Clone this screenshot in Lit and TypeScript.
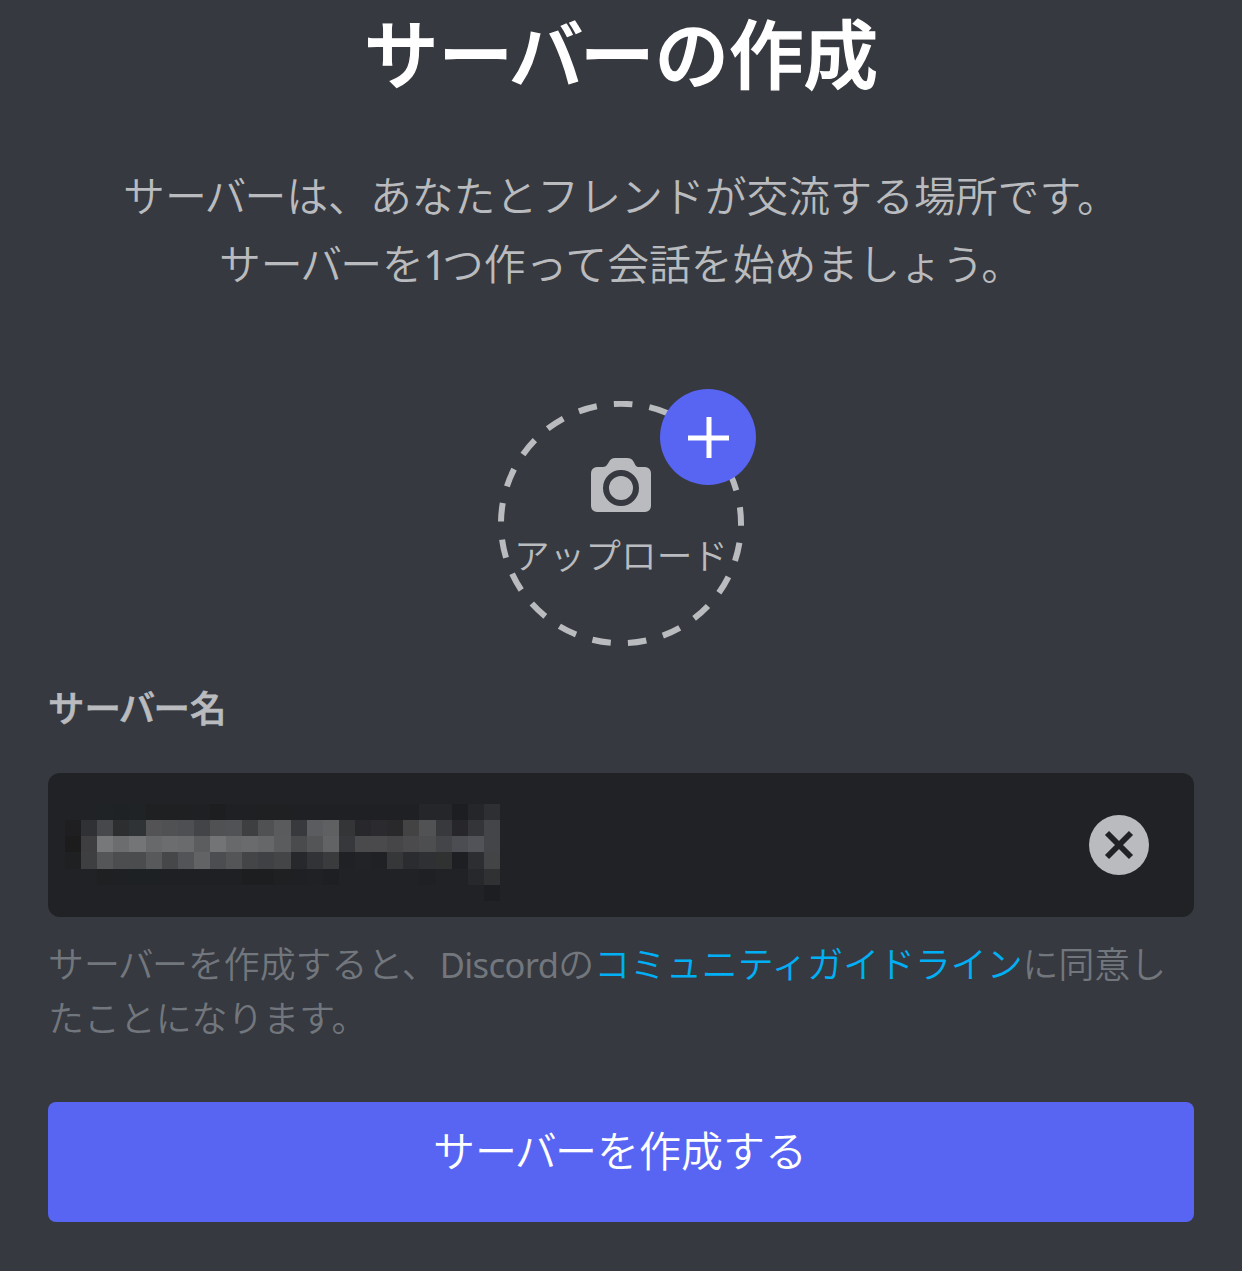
import { LitElement, html, css } from "lit";
import { customElement } from "lit/decorators.js";

// Shades of the pixelated server name, one string per row of cells.
const row = (s: string) => s.trim().split(/\s+/);
const MOSAIC: string[][] = [
  row(`202225 202225 1f2325 1f2225 1f2325 1f2022 1f2022 1f2022 1f2023 1d1e20 1f2023 1f2023 1f2022 1f2022
       1f2023 1f2023 1f2023 1f2023 1f2023 1f2023 1f2023 1f2023 25262a 25262a 1d1e21 25262a 2e2f33`),
  row(`1f1f22 303134 47484c 2d2e30 303336 535355 505152 4e4f52 434448 505153 515256 3e3f41 505153 5a5b5d
       38393d 5b5c5f 5f6062 343536 28282c 2b2b2f 29292c 434344 515254 38393d 27272b 343539 444548`),
  row(`1c1c1d 3e3e40 77787a 6c6d6f 747577 68696b 6c6d6f 6a6b6c 5c5d5f 737476 68696b 6a6b6d 666768 5b5c5d
       4a4b4c 545556 626365 37383b 4a4a4c 4a4a4c 464648 4b4b4d 4d4e50 444549 4c4d52 525358 444549`),
  row(`1f2022 3e3f40 555658 4c4d4e 4b4c4d 58595b 464749 535457 626365 4c4d51 545557 444547 404145 444547
       27282b 323336 3a3b3c 202125 222327 202125 363738 2b2c2f 2f3034 303131 1e1f22 2d2e32 434446`),
  row(`202225 202225 1e2022 1f2023 1d2123 1d2123 1f2023 1f2023 1f2023 1f2023 1f2023 1d1e20 1d1e20 1f2022
       1f2023 202125 1e1f22 202225 202225 202225 202225 202225 1f2023 202225 202225 27282c 303132`),
  row(`202225 202225 202225 202225 202225 202225 202225 202225 202225 202225 202225 202225 202225 202225
       202225 202225 202225 202225 202225 202225 202225 202225 202225 202225 202225 202225 1d1e21`),
];

// "サーバー" set with the tighter spacing around the middle character.
const server = html`サ<span class="tight">ーバ</span>ー`;

@customElement("app-root")
export class AppRoot extends LitElement {
  static styles = css`
    :host {
      display: block;
      font-family: "Noto Sans CJK JP", sans-serif;
      font-weight: 350;
    }
    .page {
      box-sizing: border-box;
      width: 1242px;
      height: 1271px;
      padding: 0 48px;
      background: #36393f;
      color: #b9bbbe;
      display: flex;
      flex-direction: column;
      white-space: nowrap;
    }
    .tight { letter-spacing: -0.045em; }
    .title {
      box-sizing: border-box;
      margin: 0;
      height: 160px;
      line-height: 102px;
      font-size: 74.5px;
      font-weight: 500;
      -webkit-text-stroke: 1.3px #fff;
      color: #fff;
      text-align: center;
    }
    .intro {
      margin: 0;
      height: 229px;
      line-height: 68px;
      font-size: 41.85px;
      text-align: center;
    }
    .one {
      font-family: "Noto Sans";
      font-weight: 400;
      letter-spacing: -5px;
      margin-left: -1px;
      line-height: 1;
    }
    .upload {
      position: relative;
      align-self: center;
      width: 246px;
      height: 246px;
      margin-top: 12px;
      display: flex;
      flex-direction: column;
      align-items: center;
    }
    .ring { position: absolute; inset: 0; }
    .camera { margin-top: 57px; display: block; }
    .caption { font-size: 35.7px; line-height: 50px; margin-top: 17px; }
    .add { position: absolute; left: 162px; top: -12px; }
    .label {
      margin-top: 33px;
      height: 93px;
      line-height: 52px;
      font-size: 36.4px;
      font-weight: 500;
      -webkit-text-stroke: 0.7px #b9bbbe;
    }
    .field {
      box-sizing: border-box;
      height: 144px;
      padding: 0 45px 0 17px;
      border-radius: 12px;
      background: #202225;
      display: flex;
      align-items: center;
      justify-content: space-between;
    }
    .mosaic {
      display: grid;
      grid-template-columns: repeat(27, 1fr);
      grid-template-rows: repeat(6, 1fr);
      width: 435px;
      height: 97px;
      margin-top: 15px;
    }
    .terms {
      box-sizing: border-box;
      margin: 0;
      padding-top: 18px;
      height: 185px;
      line-height: 54px;
      font-size: 35.88px;
      color: #72767d;
    }
    .latin {
      font-family: "Noto Sans";
      font-weight: 400;
      font-size: 34.5px;
      letter-spacing: -0.6px;
      line-height: 1;
      margin-left: 2px;
    }
    .link { color: #00aff4; }
    .submit {
      height: 120px;
      border: 0;
      padding: 0 2px 26px 0;
      border-radius: 8px;
      background: #5865f2;
      color: #fff;
      font: inherit;
      font-size: 42px;
      line-height: 60px;
    }
  `;

  render() {
    return html`
      <main class="page">
        <h1 class="title">${server}の作成</h1>
        <p class="intro">
          ${server}は、あなたとフレンドが交流する場所です。<br />
          ${server}を<span class="one">1</span>つ作って会話を始めましょう。
        </p>
        <div class="upload">
          <svg class="ring" width="246" height="246" viewBox="0 0 246 246" fill="none">
            <path d="M3 122.5A120 119.7 0 0 1 243 122.5A120 119.7 0 0 1 3 122.5Z"
              stroke="#b9bbbe" stroke-width="6" stroke-dasharray="18.6 17.2" stroke-dashoffset="-2" />
          </svg>
          <svg class="camera" width="60" height="54" viewBox="0 0 60 54">
            <path fill="#b9bbbe" d="M24 0H36C39 0 41 1.2 42.300 3.200C44 6 44.500 9 48 9H54A6 6 0 0 1 60 15V48A6 6 0 0 1 54 54H6A6 6 0 0 1 0 48V15A6 6 0 0 1 6 9H12C15.500 9 16.500 6 18.200 3.500C19.500 1.300 21 0 24 0Z" />
            <circle cx="30" cy="30" r="15" fill="none" stroke="#36393f" stroke-width="6" />
          </svg>
          <div class="caption">アップロード</div>
          <svg class="add" width="96" height="96" viewBox="0 0 96 96">
            <circle cx="48" cy="48" r="48" fill="#5865f2" />
            <path d="M28 49H69M49 28V69" stroke="#fff" stroke-width="5" />
          </svg>
        </div>
        <div class="label">${server}名</div>
        <div class="field">
          <div class="mosaic">
            ${MOSAIC.flat().map((c) => html`<i style="background:#${c}"></i>`)}
          </div>
          <svg width="60" height="60" viewBox="0 0 60 60">
            <circle cx="30" cy="30" r="30" fill="#b9bbbe" />
            <path d="M18 18L42 42M42 18L18 42" stroke="#202225" stroke-width="5.800" />
          </svg>
        </div>
        <p class="terms">
          ${server}を作成すると、<span class="latin">Discord</span>の<span class="link">コミュニティガイドライン</span>に同意し<br />たことになります。
        </p>
        <button class="submit">${server}を作成する</button>
      </main>
    `;
  }
}
